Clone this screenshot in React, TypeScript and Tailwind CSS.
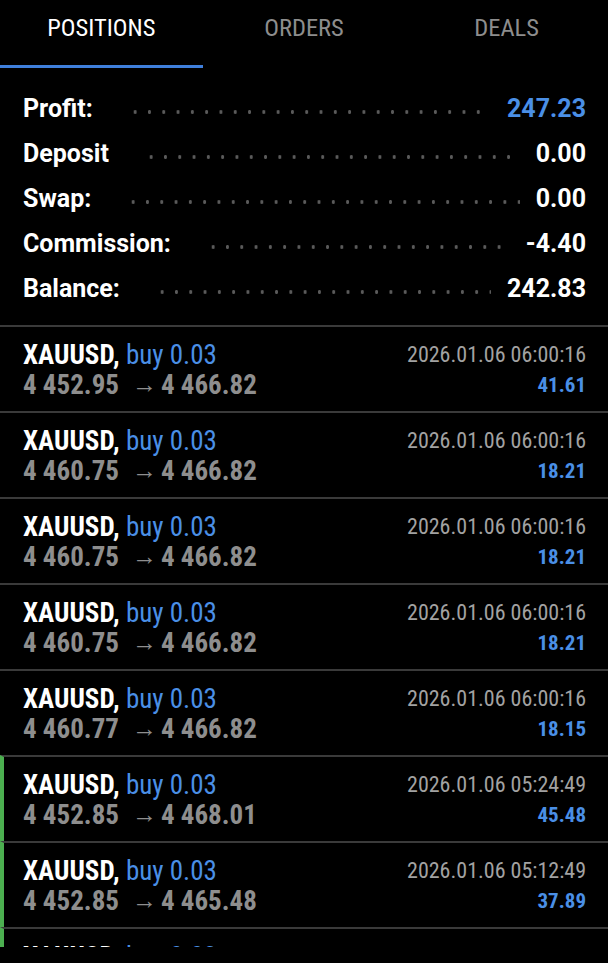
const summary = [
  { label: "Profit:", value: "247.23", blue: true },
  { label: "Deposit", value: "0.00" },
  { label: "Swap:", value: "0.00" },
  { label: "Commission:", value: "-4.40" },
  { label: "Balance:", value: "242.83" },
]

const positions = [
  { open: "4 452.95", close: "4 466.82", time: "2026.01.06 06:00:16", profit: "41.61" },
  { open: "4 460.75", close: "4 466.82", time: "2026.01.06 06:00:16", profit: "18.21" },
  { open: "4 460.75", close: "4 466.82", time: "2026.01.06 06:00:16", profit: "18.21" },
  { open: "4 460.75", close: "4 466.82", time: "2026.01.06 06:00:16", profit: "18.21" },
  { open: "4 460.77", close: "4 466.82", time: "2026.01.06 06:00:16", profit: "18.15" },
  { open: "4 452.85", close: "4 468.01", time: "2026.01.06 05:24:49", profit: "45.48", marked: true },
  { open: "4 452.85", close: "4 465.48", time: "2026.01.06 05:12:49", profit: "37.89", marked: true },
  { open: "4 452.85", close: "4 465.48", time: "2026.01.06 05:02:11", profit: "37.89", marked: true },
]

function Tabs() {
  const tabs = ["POSITIONS", "ORDERS", "DEALS"]
  return (
    <div className="grid grid-cols-3 h-[68px]">
      {tabs.map((t, i) => (
        <div key={t} className="flex flex-col">
          <div
            className={
              i === 0
                ? "h-[56px] flex items-center justify-center text-[24.5px] text-white"
                : "h-[56px] flex items-center justify-center text-[24.5px] text-[#8d8d8d]"
            }
          >
            {t}
          </div>
          {i === 0 && <div className="mt-auto h-[3px] bg-[#3f7fdc]" />}
        </div>
      ))}
    </div>
  )
}

function Summary() {
  return (
    <div className="pt-[18px] pb-[14px] pl-[23px] pr-[22px] font-['Roboto',sans-serif]">
      {summary.map((row) => (
        <div key={row.label} className="flex items-center h-[45px] text-[25px] font-bold">
          <span className="text-white">{row.label}</span>
          {/* leader dots between label and value */}
          <span className="flex-1 h-[4px] mt-[6px] ml-[35px] mr-[16px] bg-[radial-gradient(circle,#5a5a5a_1.7px,transparent_1.9px)] bg-[length:14.3px_4px] bg-repeat-x" />
          <span className={row.blue ? "text-[#4a8fe6]" : "text-white"}>{row.value}</span>
        </div>
      ))}
    </div>
  )
}

function PositionRow({ p }: { p: (typeof positions)[number] }) {
  return (
    <div
      className={
        p.marked
          ? "flex justify-between h-[86px] border-t-2 border-[#3a3a3a] border-l-4 border-l-[#4caf50] pl-[19px] pr-[22px] pt-[13px] leading-[30px]"
          : "flex justify-between h-[86px] border-t-2 border-[#3a3a3a] pl-[23px] pr-[22px] pt-[13px] leading-[30px]"
      }
    >
      <div className="text-[27px]">
        <div className="h-[30px]">
          <span className="font-bold text-white">XAUUSD,</span>{" "}
          <span className="text-[#4a8fe6]">buy 0.03</span>
        </div>
        <div className="h-[30px] font-bold text-[#8e8e8e] whitespace-nowrap">
          {p.open}
          <span className="inline-block w-[18px] ml-[13px] mr-[11px] text-center font-['Roboto',sans-serif] font-normal text-[25px] align-[1px]">
            →
          </span>
          {p.close}
        </div>
      </div>
      <div className="flex flex-col items-end">
        <div className="h-[30px] text-[22px] text-[#a2a2a2]">{p.time}</div>
        <div className="h-[30px] text-[21px] font-bold text-[#4a8fe6]">{p.profit}</div>
      </div>
    </div>
  )
}

export default function App() {
  return (
    <div className="w-[608px] h-[963px] bg-black overflow-hidden font-['Roboto_Condensed',Roboto,sans-serif]">
      <Tabs />
      <Summary />
      <div className="h-[622px] overflow-hidden">
        {positions.map((p, i) => (
          <PositionRow key={i} p={p} />
        ))}
      </div>
    </div>
  )
}
